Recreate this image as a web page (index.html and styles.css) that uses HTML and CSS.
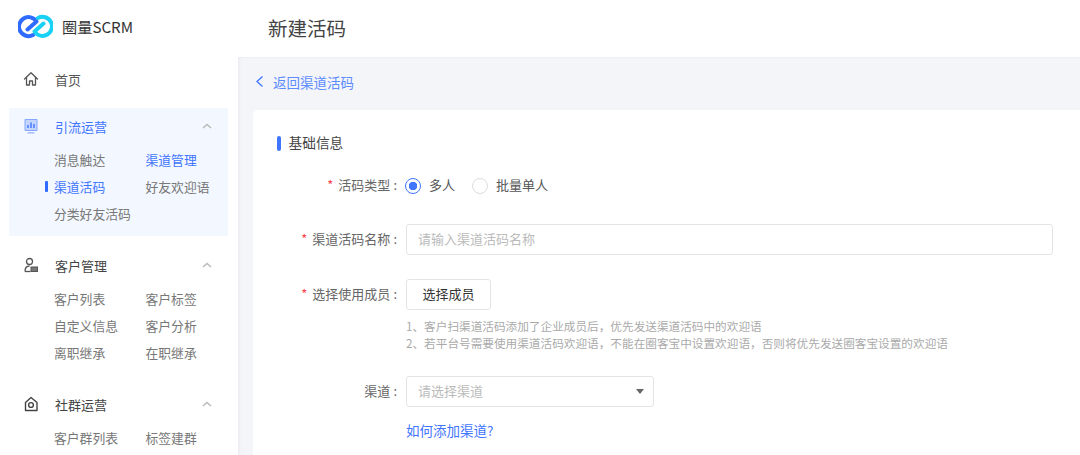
FILE: index.html
```html
<!DOCTYPE html>
<html lang="en">

<head>
    <meta charset="UTF-8">
    <meta name="viewport" content="width=device-width, initial-scale=1.0">
    <title>新建活码</title>
    <link rel="stylesheet" href="styles.css">
</head>

<body>
    <aside class="sidebar">
        <div class="brand">
            <svg class="brand-logo" width="35" height="25" viewBox="0 0 35 25" fill="none" stroke-width="4" stroke-linecap="round" stroke-linejoin="round">
                <path d="M9.5 15.5L18.5 7.5A9.5 9.5 0 1 0 15 21" stroke="#2f6bff"/>
                <path d="M25.5 9.5L16.5 17.5A9.5 9.5 0 1 0 20 4" stroke="#19d0f5"/>
            </svg>
            <span class="brand-name">圈量SCRM</span>
        </div>

        <a class="nav-home" href="#">
            <svg class="nav-icon" width="16" height="16" viewBox="0 0 16 16" fill="none" stroke="#555" stroke-width="1.3" stroke-linejoin="round" stroke-linecap="round">
                <path d="M1.5 8L8 1.8 14.5 8"/>
                <path d="M3.5 6.5V14H6.5V10H9.5V14H12.5V6.5"/>
            </svg>
            <span>首页</span>
        </a>

        <div class="nav-group active">
            <div class="nav-title">
                <svg class="nav-icon" width="16" height="16" viewBox="0 0 16 16">
                    <path d="M2 1.5H14V12.5H2Z" fill="#c3d4ff" stroke="#86a6ff"/>
                    <path d="M4.5 14.8H11.5" stroke="#a9c0ff" stroke-width="1.6"/>
                    <path d="M5 10V7M8 10V4.5M11 10V6" stroke="#3f75ff" stroke-width="1.4"/>
                </svg>
                <span>引流运营</span>
                <svg class="chevron" width="10" height="6" viewBox="0 0 10 6" fill="none"><path d="M1 5L5 1.5 9 5" stroke="#bbb" stroke-width="1.6"/></svg>
            </div>
            <div class="nav-sub">
                <a href="#">消息触达</a>
                <a href="#" class="blue">渠道管理</a>
                <a href="#" class="blue current">渠道活码</a>
                <a href="#">好友欢迎语</a>
                <a href="#">分类好友活码</a>
            </div>
        </div>

        <div class="nav-group">
            <div class="nav-title">
                <svg class="nav-icon" width="16" height="16" viewBox="0 0 16 16" fill="none" stroke="#555" stroke-width="1.3">
                    <circle cx="6.5" cy="4.5" r="3"/>
                    <path d="M2 14.5C2 10.5 3.8 9 6.5 9"/>
                    <path d="M2 14.5H7.5"/>
                    <rect x="8" y="10" width="6.5" height="4.5" fill="#777" stroke="#555" stroke-width="1"/>
                </svg>
                <span>客户管理</span>
                <svg class="chevron" width="10" height="6" viewBox="0 0 10 6" fill="none"><path d="M1 5L5 1.5 9 5" stroke="#bbb" stroke-width="1.6"/></svg>
            </div>
            <div class="nav-sub">
                <a href="#">客户列表</a>
                <a href="#">客户标签</a>
                <a href="#">自定义信息</a>
                <a href="#">客户分析</a>
                <a href="#">离职继承</a>
                <a href="#">在职继承</a>
            </div>
        </div>

        <div class="nav-group">
            <div class="nav-title">
                <svg class="nav-icon" width="16" height="16" viewBox="0 0 16 16" fill="none" stroke="#444" stroke-width="1.4" stroke-linejoin="round">
                    <path d="M8 1.5L14 6.5V14.5H2.5V6.5Z"/>
                    <circle cx="8" cy="9" r="2.4"/>
                </svg>
                <span>社群运营</span>
                <svg class="chevron" width="10" height="6" viewBox="0 0 10 6" fill="none"><path d="M1 5L5 1.5 9 5" stroke="#bbb" stroke-width="1.6"/></svg>
            </div>
            <div class="nav-sub">
                <a href="#">客户群列表</a>
                <a href="#">标签建群</a>
            </div>
        </div>
    </aside>

    <div class="content">
        <header class="page-header">新建活码</header>

        <a class="back-link" href="#">
            <svg width="9" height="13" viewBox="0 0 9 13" fill="none"><path d="M7.5 1.5L2 6.5 7.5 11.5" stroke="#3f75ff" stroke-width="1.3"/></svg>
            <span>返回渠道活码</span>
        </a>

        <section class="card">
            <h2 class="section-title">基础信息</h2>

            <form>
                <div class="form-row row-type">
                    <label class="form-label"><i>*</i>活码类型</label>
                    <div class="radio-group">
                        <span class="radio-item"><span class="radio checked"></span>多人</span>
                        <span class="radio-item"><span class="radio"></span>批量单人</span>
                    </div>
                </div>

                <div class="form-row row-name">
                    <label class="form-label"><i>*</i>渠道活码名称</label>
                    <div class="field">请输入渠道活码名称</div>
                </div>

                <div class="form-row row-member">
                    <label class="form-label"><i>*</i>选择使用成员</label>
                    <div>
                        <button type="button" class="member-btn">选择成员</button>
                        <p class="hint">1、客户扫渠道活码添加了企业成员后，优先发送渠道活码中的欢迎语<br>2、若平台号需要使用渠道活码欢迎语，不能在圈客宝中设置欢迎语，否则将优先发送圈客宝设置的欢迎语</p>
                    </div>
                </div>

                <div class="form-row row-channel">
                    <label class="form-label">渠道</label>
                    <div>
                        <div class="field select">请选择渠道<span class="caret"></span></div>
                        <a class="help-link" href="#">如何添加渠道?</a>
                    </div>
                </div>
            </form>
        </section>
    </div>
</body>

</html>
```

FILE: styles.css
```css
* {
    box-sizing: border-box;
}

html,
body {
    height: 455px;
}

body {
    margin: 0;
    display: flex;
    overflow: hidden;
    background-color: #f4f5f9;
    color: #333;
    font-family: "Noto Sans CJK SC", "Liberation Sans", sans-serif;
    font-size: 13px;
}

a {
    color: inherit;
    text-decoration: none;
}

/* sidebar */
.sidebar {
    flex: 0 0 238px;
    height: 455px;
    padding: 0 10px 0 9px;
    background-color: white;
    box-shadow: 1px 0 3px rgba(0, 0, 0, 0.05);
    overflow: hidden;
}

.brand {
    display: flex;
    align-items: center;
    height: 52px;
    margin-bottom: 2px;
    padding-left: 9px;
}

.brand-name {
    margin-left: 9px;
    font-size: 15.2px;
    color: #333;
}

.nav-home {
    display: flex;
    align-items: center;
    height: 50px;
    margin-bottom: 4px;
    padding-left: 14px;
    color: #555;
}

.nav-icon {
    flex: none;
    margin-right: 16px;
}

.nav-group {
    height: 128px;
    margin-bottom: 11px;
}

.nav-title {
    display: flex;
    align-items: center;
    height: 36px;
    margin-bottom: 2px;
    padding-left: 14px;
    color: #444;
}

.chevron {
    margin-left: auto;
    margin-right: 16px;
}

.nav-sub {
    display: grid;
    grid-template-columns: 91.5px 1fr;
    grid-auto-rows: 27px;
    padding-left: 45px;
    font-size: 12.8px;
    color: #777;
}

.nav-sub a {
    position: relative;
    line-height: 27px;
}

.nav-group.active {
    background-color: #f3f7ff;
    border-radius: 2px;
}

.nav-group.active .nav-title {
    color: #3f75ff;
}

.nav-sub .blue {
    color: #3f75ff;
}

.nav-sub .current::before {
    content: "";
    position: absolute;
    left: -9px;
    top: 8px;
    width: 3px;
    height: 11px;
    border-radius: 1px;
    background-color: #2f6bff;
}

/* main */
.content {
    flex: 1;
    min-width: 0;
}

.page-header {
    height: 57px;
    padding: 0 30px;
    background-color: white;
    line-height: 55px;
    font-size: 19.5px;
    color: #444;
    box-shadow: 0 1px 2px rgba(0, 0, 0, 0.03);
}

.back-link {
    display: flex;
    align-items: center;
    gap: 9px;
    height: 49px;
    margin-bottom: 4px;
    padding-left: 17px;
    font-size: 13.5px;
    color: #5c8cff;
}

.card {
    margin-left: 15px;
    margin-right: -20px;
    height: 345px;
    padding: 24px 47px 0 24px;
    background-color: white;
    border-radius: 5px 5px 0 0;
}

.section-title {
    display: flex;
    align-items: flex-start;
    gap: 8px;
    margin: 0;
    height: 17px;
    line-height: 17px;
    font-size: 13.7px;
    font-weight: normal;
    color: #444;
}

.section-title::before {
    content: "";
    width: 3.5px;
    height: 15px;
    margin-top: 2px;
    border-radius: 2px;
    background-color: #3f75ff;
}

.form-row {
    display: grid;
    grid-template-columns: 120px 1fr;
    column-gap: 9px;
}

.form-label {
    height: 31px;
    line-height: 29px;
    text-align: right;
    white-space: nowrap;
    color: #666;
}

.form-label::after {
    content: ":";
    margin-left: 3px;
}

.form-label i {
    margin-right: 5px;
    font-style: normal;
    color: #f5484d;
}

.row-type {
    margin-top: 19px;
}

.row-name {
    margin-top: 23px;
}

.row-member {
    margin-top: 24px;
}

.row-channel {
    margin-top: 25px;
}

.radio-group {
    display: flex;
    align-items: center;
    gap: 17px;
    height: 29px;
    margin-left: -1px;
    color: #555;
}

.radio-item {
    display: flex;
    align-items: center;
    gap: 8px;
}

.radio {
    width: 16px;
    height: 16px;
    margin-top: 2px;
    border: 1px solid #ddd;
    border-radius: 50%;
}

.radio.checked {
    border-color: #3f75ff;
    background: radial-gradient(circle, #3f75ff 0 4px, white 4.5px);
}

.field {
    height: 31px;
    padding: 0 11px;
    border: 1px solid #e4e4e4;
    border-radius: 3px;
    line-height: 27px;
    color: #bbb;
}

.select {
    position: relative;
    width: 248px;
}

.caret {
    position: absolute;
    right: 9px;
    top: 12px;
    border-style: solid;
    border-width: 5px 4px 0;
    border-color: #666 transparent transparent;
}

.member-btn {
    display: block;
    width: 85px;
    height: 31px;
    padding: 0 0 2px;
    border: 1px solid #e4e4e4;
    border-radius: 3px;
    background-color: white;
    color: #333;
    font: inherit;
}

.hint {
    margin: 7px 0 0;
    font-size: 11.65px;
    line-height: 17px;
    color: #aaa;
    white-space: nowrap;
}

.help-link {
    display: block;
    margin-top: 13px;
    font-size: 13.5px;
    color: #3f75ff;
}
```
